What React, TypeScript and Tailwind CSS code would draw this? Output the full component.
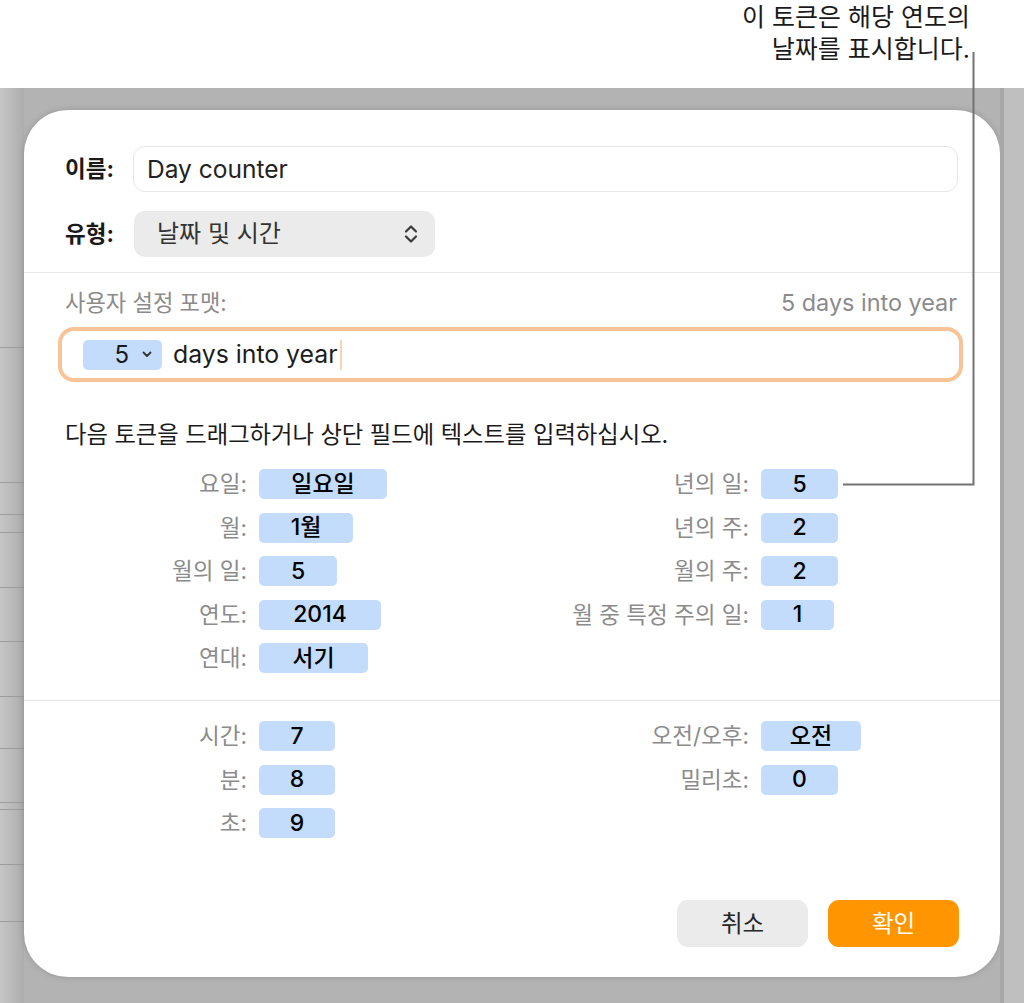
import React from "react";

type Row = [string, string, string];

const dateLeft: Row[] = [
  ["요일:", "일요일", "w-[128px]"],
  ["월:", "1월", "w-[94px]"],
  ["월의 일:", "5", "w-[78px]"],
  ["연도:", "2014", "w-[122px]"],
  ["연대:", "서기", "w-[109px]"],
];

const dateRight: Row[] = [
  ["년의 일:", "5", "w-[77px]"],
  ["년의 주:", "2", "w-[77px]"],
  ["월의 주:", "2", "w-[77px]"],
  ["월 중 특정 주의 일:", "1", "w-[73px]"],
];

const timeLeft: Row[] = [
  ["시간:", "7", "w-[76px]"],
  ["분:", "8", "w-[76px]"],
  ["초:", "9", "w-[76px]"],
];

const timeRight: Row[] = [
  ["오전/오후:", "오전", "w-[100px]"],
  ["밀리초:", "0", "w-[77px]"],
];

const Token = ({ label, value, w, labelW }: { label: string; value: string; w: string; labelW: string }) => (
  <div className="flex h-[30px] items-center">
    <div className={`${labelW} whitespace-nowrap text-right text-[22.5px] leading-[30px] text-[#8b8b8b]`}>{label}</div>
    <div
      className={`${w} ml-[12px] flex h-[30px] items-center justify-center rounded-[5px] bg-[#c3dcfc] text-[23px] font-medium text-black`}
    >
      {value}
    </div>
  </div>
);

const TokenGrid = ({ left, right }: { left: Row[]; right: Row[] }) => (
  <div className="flex pl-[41px]">
    <div className="flex w-[464px] flex-col gap-[13.5px]">
      {left.map(([l, v, w]) => (
        <Token key={l} label={l} value={v} w={w} labelW="w-[182px]" />
      ))}
    </div>
    <div className="flex flex-col gap-[13.5px]">
      {right.map(([l, v, w]) => (
        <Token key={l} label={l} value={v} w={w} labelW="w-[220px]" />
      ))}
    </div>
  </div>
);

const bgLines = [260, 135, 32, 18, 55, 54, 55, 52, 54, 7, 55, 57];

export default function App() {
  return (
    <div className="relative flex h-[1003px] w-[1024px] flex-col overflow-hidden bg-white font-['Inter','Noto_Sans_CJK_KR',sans-serif] text-[#1d1d1d]">
      {/* callout text */}
      <div className="flex h-[88px] flex-col items-end pr-[54px] pt-[1px] text-[25px] leading-[32px] text-[#1a1a1a]">
        <div>이 토큰은 해당 연도의</div>
        <div>날짜를 표시합니다.</div>
      </div>

      <div className="flex flex-1 bg-[#b3b3b3]">
        {/* background app edge */}
        <div className="flex w-[24px] flex-col bg-gradient-to-r from-[#c6c6c6] to-[#adadad]">
          {bgLines.map((h, i) => (
            <div key={i} className="shrink-0 border-b border-[#9c9c9c]" style={{ height: h }} />
          ))}
        </div>

        {/* dialog */}
        <div className="mt-[22px] flex h-[867px] w-[976px] flex-col rounded-[44px] bg-white pt-[36px] pb-[30px] shadow-[0_0_6px_rgba(0,0,0,0.18)]">
          <div className="flex items-center pl-[41px] pr-[42px]">
            <div className="w-[68px] text-[22.5px] font-bold text-[#1a1a1a]">이름:</div>
            <div className="flex h-[46px] flex-1 items-center rounded-[12px] border border-[#e6e6e6] pl-[13px] text-[24.5px] text-[#222]">
              Day counter
            </div>
          </div>

          <div className="mt-[19px] flex items-center pl-[41px]">
            <div className="w-[69px] text-[22.5px] font-bold text-[#1a1a1a]">유형:</div>
            <div className="flex h-[46px] w-[301px] items-center justify-between rounded-[11px] bg-[#ebebeb] pl-[23px] pr-[16px] text-[24px] text-[#333]">
              <span>날짜 및 시간</span>
              <svg width="16" height="22" viewBox="0 0 16 22" fill="none" stroke="#3a3a3a" strokeWidth="2.2" strokeLinecap="round" strokeLinejoin="round">
                <path d="M3 8.5 L8 3.5 L13 8.5" />
                <path d="M3 13.5 L8 18.5 L13 13.5" />
              </svg>
            </div>
          </div>

          <div className="mt-[15px] h-px bg-[#e6e6e6]" />

          <div className="mt-[16px] flex h-[28px] items-center justify-between pl-[41px] pr-[43px] text-[22.2px] text-[#8b8b8b]">
            <span>사용자 설정 포맷:</span>
            <span className="text-[23.4px]">5 days into year</span>
          </div>

          <div className="mx-[34px] mr-[37px] mt-[10px] flex h-[55px] items-center rounded-[16px] border-[4px] border-[#f8c396] bg-white pl-[21px]">
            <div className="flex h-[30px] w-[79px] items-center justify-end gap-[13px] rounded-[5px] bg-[#c3dcfc] pr-[10px] text-[24px] text-[#1a1a1a]">
              <span>5</span>
              <svg width="10" height="7" viewBox="0 0 10 7" fill="none" stroke="#333" strokeWidth="1.8" strokeLinecap="round" strokeLinejoin="round">
                <path d="M1.5 1.5 L5 5 L8.5 1.5" />
              </svg>
            </div>
            <span className="ml-[11px] text-[24.8px] text-[#1d1d1d]">days into year</span>
            <span className="ml-[2px] h-[30px] w-[2px] bg-[#fad3b0]" />
          </div>

          <div className="mt-[39px] h-[28px] whitespace-nowrap pl-[41px] text-[23.3px] leading-[28px] text-[#1a1a1a]">
            다음 토큰을 드래그하거나 상단 필드에 텍스트를 입력하십시오.
          </div>

          <div className="mt-[20px]">
            <TokenGrid left={dateLeft} right={dateRight} />
          </div>

          <div className="mt-[27px] h-px bg-[#e6e6e6]" />

          <div className="mt-[20px]">
            <TokenGrid left={timeLeft} right={timeRight} />
          </div>

          <div className="mt-auto flex justify-end gap-[20px] pr-[41px]">
            <button className="h-[47px] w-[131px] rounded-[11px] bg-[#ebebeb] text-[23.5px] text-[#262626]">취소</button>
            <button className="h-[47px] w-[131px] rounded-[11px] bg-[#ff9500] text-[23.5px] text-white">확인</button>
          </div>
        </div>

        {/* right edge of background window */}
        <div className="flex-1 border-l-[4px] border-[#a8a8a8] bg-[#bfbfbf]" />
      </div>

      {/* callout leader line */}
      <svg className="pointer-events-none absolute left-0 top-0" width="1024" height="1003" fill="none">
        <path d="M973.5 52 V484.5 H843" stroke="#737373" strokeWidth="2" />
      </svg>
    </div>
  );
}
